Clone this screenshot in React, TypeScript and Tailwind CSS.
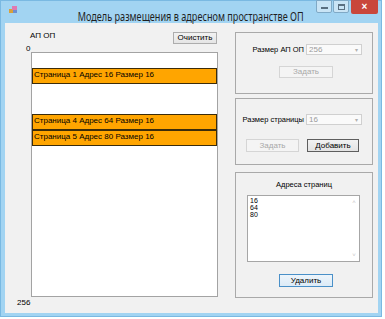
import React from "react";

const pages = [
  { n: 1, addr: 16, size: 16 },
  { n: 4, addr: 64, size: 16 },
  { n: 5, addr: 80, size: 16 },
];

const sans = "font-['Liberation_Sans',Arial,sans-serif]";

const Btn = ({ label, className = "", disabled = false, variant = "normal" }: { label: string; className?: string; disabled?: boolean; variant?: "normal" | "strong" | "focus" }) => (
  <div
    className={
      "flex items-center justify-center text-[8px] leading-none " +
      (disabled
        ? "border border-[#d5d5d5] bg-[#f4f4f4] text-[#a8a8a8] "
        : variant === "strong"
        ? "border border-[#5e5e5e] bg-gradient-to-b from-[#f2f2f2] to-[#e3e3e3] text-black "
        : variant === "focus"
        ? "border border-[#4a90c8] bg-gradient-to-b from-[#eef5fb] to-[#dcebf7] text-black "
        : "border border-[#adadad] bg-gradient-to-b from-[#f2f2f2] to-[#e5e5e5] text-black ") +
      className
    }
  >
    {label}
  </div>
);

const Combo = ({ value, className = "" }: { value: string; className?: string }) => (
  <div className={"flex items-center justify-between border border-[#d0d0d0] bg-[#fafafa] pl-[2px] pr-[3px] text-[8px] leading-none text-[#9a9a9a] " + className}>
    <span>{value}</span>
    <span className="text-[6px] text-[#b0b0b0]">▾</span>
  </div>
);

export default function App() {
  return (
    <div className={"w-[385px] h-[319px] bg-white " + sans}>
      <div className="flex flex-col w-[382px] h-[317px] bg-[#a2d4f2] border border-[#7ab9e2]">
        {/* title bar */}
        <div className="relative flex h-[22px] items-start">
          <svg className="ml-[8px] mt-[5px]" width="9" height="8" viewBox="0 0 9 8">
            <rect x="0" y="3" width="4" height="4" fill="#d9a13a" />
            <rect x="3" y="0" width="5" height="4" fill="#e07ab0" />
            <rect x="4" y="4" width="4" height="3" fill="#6d8fd0" />
          </svg>
          <div className="absolute left-[0px] right-[0px] top-[3px] text-center">
            <span className="inline-block scale-x-[0.76] font-['Noto_Sans',sans-serif] text-[12px] leading-[15px] text-[#1e1e1e] whitespace-nowrap">
              Модель размещения в адресном пространстве ОП
            </span>
          </div>
          <div className="absolute right-[3px] top-[-1px] flex gap-[1px]">
            <div className="flex h-[13px] w-[16px] items-center justify-center rounded-b-[2px] border border-[#7fa9c6] bg-[#c9e4f5]">
              <div className="mt-[3px] h-[2px] w-[7px] bg-[#5a6f80]" />
            </div>
            <div className="flex h-[13px] w-[16px] items-center justify-center rounded-b-[2px] border border-[#7fa9c6] bg-[#c9e4f5]">
              <div className="h-[6px] w-[7px] border border-[#5a6f80] border-t-2" />
            </div>
            <div className="ml-[1px] flex h-[14px] w-[27px] items-center justify-center rounded-b-[2px] bg-[#c9473b] text-[10px] font-bold leading-none text-white">
              ×
            </div>
          </div>
        </div>

        {/* client area */}
        <div className="flex flex-1 ml-[4px] mr-[3px] mb-[3px] bg-[#f1f1f1]">
          {/* left column */}
          <div className="flex w-[214px] flex-col">
            <div className="mt-[9px] flex h-[13px] items-start justify-between">
              <span className="ml-[25px] mt-[-1px] text-[8px] leading-[9px] text-black">АП ОП</span>
              <Btn label="Очистить" className="h-[12px] w-[44px] mr-[2px]" />
            </div>
            <span className="ml-[21px] h-[7px] text-[8px] leading-[7px] text-black">0</span>
            <div className="relative ml-[26px] h-[245px] w-[187px] border border-[#a3a3a3] bg-white">
              {pages.map((p) => (
                <div
                  key={p.n}
                  className="absolute left-0 right-0 h-[16px] border border-[#3b2c0a] bg-[#ffa500] px-[1px] text-[8px] leading-[11px] text-black"
                  style={{ top: Math.round(p.addr * 0.96) }}
                >
                  Страница {p.n} Адрес {p.addr} Размер {p.size}
                </div>
              ))}
            </div>
            <span className="ml-[12px] mt-[2px] text-[8px] leading-[8px] text-black">256</span>
          </div>

          {/* right column */}
          <div className="ml-[16px] flex w-[138px] flex-col">
            <div className="mt-[9px] h-[62px] border border-[#a9a9a9]">
              <div className="mt-[11px] flex items-center">
                <span className="w-[68px] whitespace-nowrap text-right text-[7.5px] leading-none text-black">Размер АП ОП</span>
                <Combo value="256" className="ml-[2px] h-[11px] w-[56px]" />
              </div>
              <Btn label="Задать" disabled className="ml-[43px] mt-[11px] h-[12px] w-[54px]" />
            </div>

            <div className="mt-[4px] h-[67px] border border-[#a9a9a9]">
              <div className="mt-[15px] flex items-center">
                <span className="w-[68px] whitespace-nowrap text-right text-[7.5px] leading-none text-black">Размер страницы</span>
                <Combo value="16" className="ml-[2px] h-[11px] w-[56px]" />
              </div>
              <div className="mt-[14px] flex">
                <Btn label="Задать" disabled className="ml-[10px] h-[13px] w-[53px]" />
                <Btn label="Добавить" variant="strong" className="ml-[8px] h-[13px] w-[52px]" />
              </div>
            </div>

            <div className="mt-[7px] h-[126px] border border-[#a9a9a9] flex flex-col">
              <div className="mt-[8px] text-center text-[7.5px] leading-[8px] text-black">Адреса страниц</div>
              <div className="ml-[11px] mt-[6px] flex h-[67px] w-[113px] border border-[#a6a6a6] bg-white">
                <div className="flex-1 pl-[2px] pt-[1px] text-[7px] leading-[7px] text-black">
                  <div>16</div>
                  <div>64</div>
                  <div>80</div>
                </div>
                <div className="flex w-[10px] flex-col items-center justify-between py-[3px] text-[6px] leading-none text-[#c4c4c4]">
                  <span>˄</span>
                  <span>˅</span>
                </div>
              </div>
              <Btn label="Удалить" variant="focus" className="ml-[43px] mt-[12px] h-[13px] w-[54px]" />
            </div>
          </div>
        </div>
      </div>
    </div>
  );
}
